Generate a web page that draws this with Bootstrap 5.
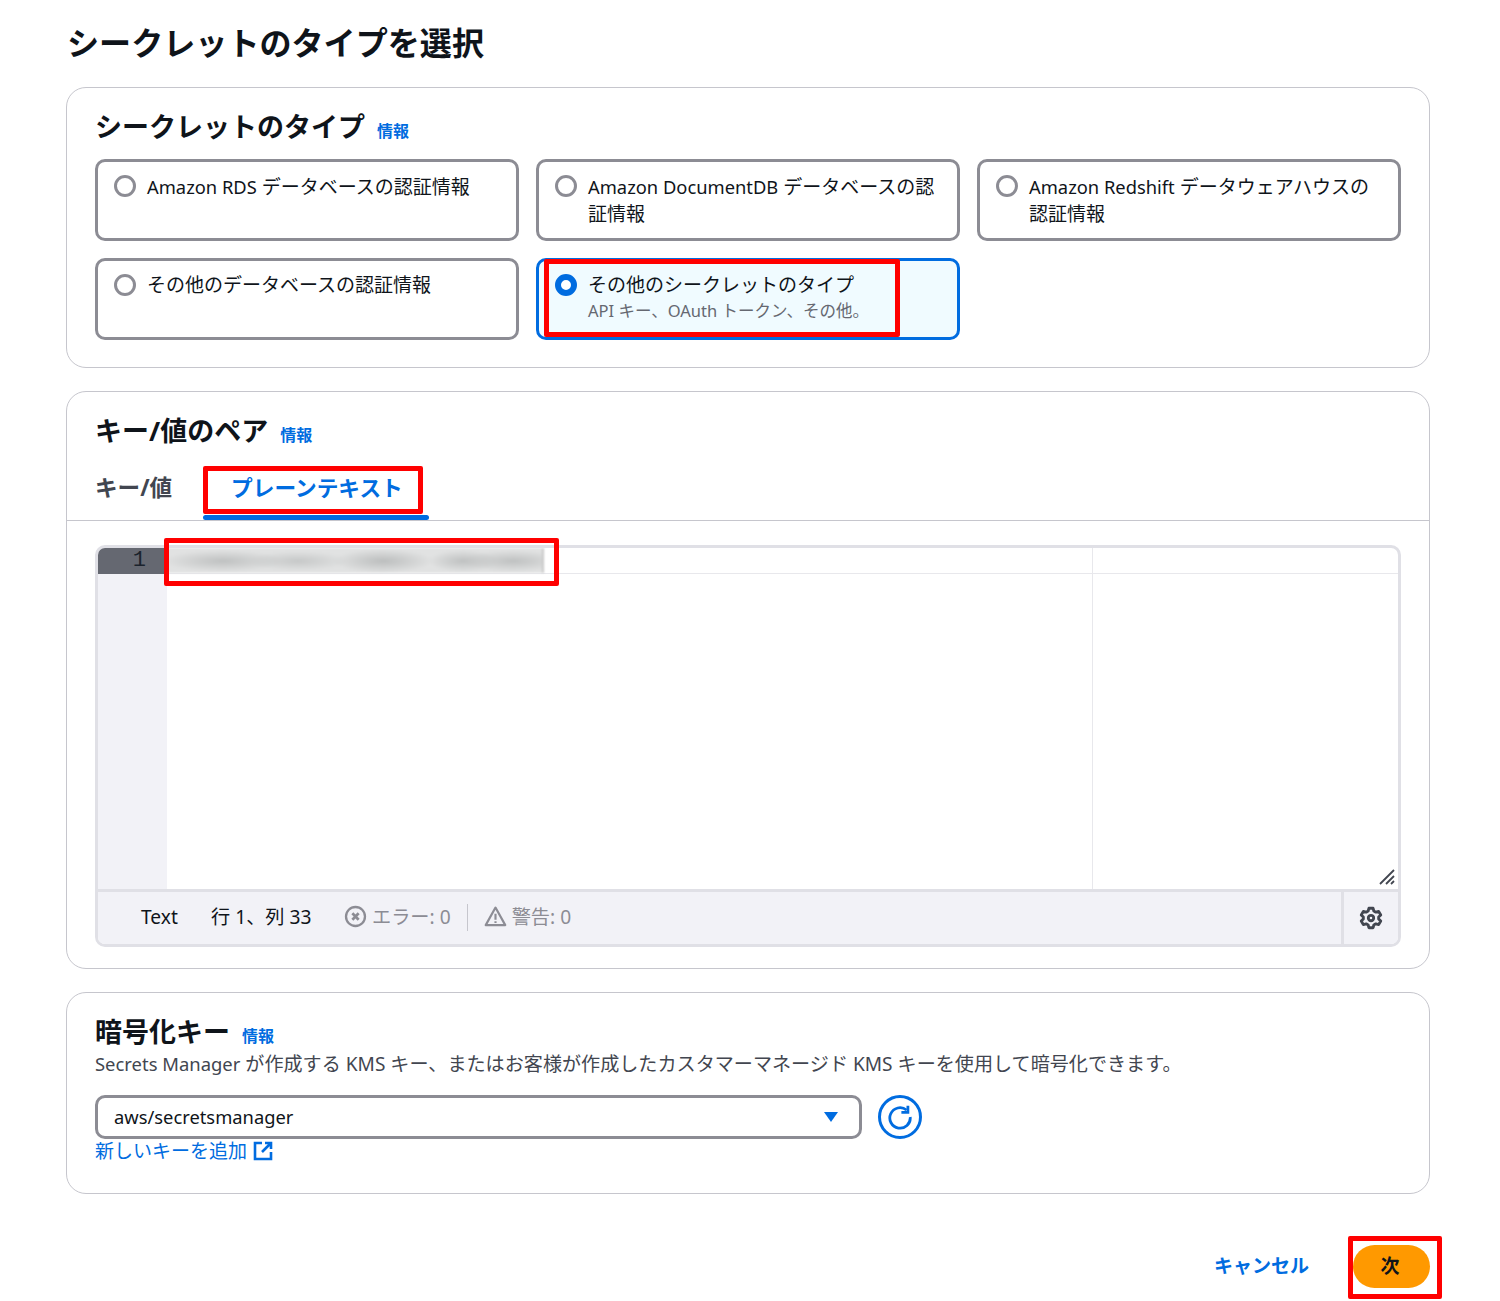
<!DOCTYPE html>
<html lang="ja">

<head>
    <meta charset="UTF-8">
    <meta name="viewport" content="width=device-width, initial-scale=1">
    <title>シークレットのタイプを選択</title>
    <link href="https://cdn.jsdelivr.net/npm/bootstrap@5.3.0/dist/css/bootstrap.min.css" rel="stylesheet">
    <style>
        body {
            font-family: "Noto Sans", "Noto Sans CJK JP", sans-serif;
            color: #0f141a;
            background: #fff;
        }

        .lat {
            font-size: .965em;
        }

        .page-wrap {
            padding: 0 70px 0 66px;
            height: 1301px;
        }

        .page-title {
            font-size: 32.1px;
            font-weight: 700;
            line-height: 44px;
            margin: 0;
            padding: 21px 0 22px 1px;
        }

        .panel {
            border: 1px solid #c6c6cd;
            border-radius: 20px;
            margin-bottom: 23px;
            padding: 0 28px;
            background: #fff;
        }

        .panel-head {
            display: flex;
            align-items: baseline;
            gap: 12px;
            padding-top: 19px;
        }

        .panel-head h2 {
            font-size: 27px;
            font-weight: 700;
            line-height: 40px;
            margin: 0;
        }

        .info-link {
            font-size: 16px;
            font-weight: 700;
            color: #006ce0;
            text-decoration: none;
        }

        .tile-row {
            --bs-gutter-x: 17px;
            --bs-gutter-y: 17px;
        }

        .tile {
            position: relative;
            display: flex;
            gap: 11px;
            height: 82px;
            padding: 10.5px 12px 0 16px;
            border: 3px solid #8c8c94;
            border-radius: 10px;
            font-size: 19px;
            line-height: 27px;
        }

        .tile-on {
            border-color: #006ce0;
            background: #f0fbff;
        }

        .tile-sub {
            font-size: 16.5px;
            line-height: 24px;
            color: #656871;
        }

        .radio-dot {
            flex: 0 0 22px;
            width: 22px;
            height: 22px;
            margin-top: 2.5px;
            border: 3px solid #8c8c94;
            border-radius: 50%;
            background: #fff;
        }

        .tile-on .radio-dot {
            border: 6px solid #006ce0;
        }

        .mark-box {
            position: absolute;
            border: 5px solid #f00;
            border-radius: 2px;
            pointer-events: none;
            z-index: 5;
        }

        .mark-tile {
            left: 5px;
            top: -2px;
            width: 356px;
            height: 78px;
        }

        .tab-line {
            position: relative;
            display: flex;
            margin: 0 -28px;
            padding-left: 28px;
            height: 70px;
            border-bottom: 1px solid #c6c6cd;
        }

        .tab-item {
            font-size: 21.7px;
            font-weight: 700;
            line-height: 30px;
            padding: 22px 0 0;
            color: #424650;
            text-decoration: none;
        }

        .tab-first {
            width: 108px;
            font-size: 22.6px;
        }

        .tab-active {
            position: relative;
            width: 226px;
            padding-left: 28px;
            color: #006ce0;
        }

        .tab-active::after {
            content: "";
            position: absolute;
            left: 0;
            right: 0;
            bottom: 0;
            height: 5px;
            border-radius: 3px;
            background: #006ce0;
        }

        .mark-tab {
            left: 136px;
            top: 15px;
            width: 220px;
            height: 48px;
        }

        .editor-box {
            position: relative;
            margin-top: 24px;
            height: 402px;
            border: 3px solid #e0e0e6;
            border-radius: 10px;
            overflow: hidden;
        }

        .editor-body {
            display: flex;
            height: 341px;
        }

        .line-nums {
            flex: 0 0 69px;
            background: #f2f2f7;
            font-family: "Liberation Mono", monospace;
            font-size: 22px;
        }

        .line-num-on {
            height: 26px;
            line-height: 26px;
            padding-right: 21px;
            text-align: right;
            color: #1b232d;
            background: #656871;
        }

        .code-area {
            position: relative;
            flex: 1;
        }

        .code-row {
            display: flex;
            height: 26px;
            border-bottom: 1px solid #e8e8ec;
        }

        .blur-strip {
            width: 376px;
            margin-left: 1px;
            background: radial-gradient(ellipse 60px 11px at 55px 13px, #bfc1c1, transparent),
                radial-gradient(ellipse 50px 10px at 130px 13px, #c6c8c8, transparent),
                radial-gradient(ellipse 50px 12px at 215px 13px, #bcbebe, transparent),
                radial-gradient(ellipse 35px 11px at 295px 13px, #bfc1c1, transparent),
                radial-gradient(ellipse 50px 11px at 345px 13px, #bfc1c1, transparent),
                #e1e2e2;
            filter: blur(1px);
            border-right: 2px solid #c8c8c8;
        }

        .print-margin {
            position: absolute;
            top: 0;
            bottom: 0;
            left: 925px;
            width: 1px;
            background: #e8e8ec;
        }

        .resize-grip {
            position: absolute;
            right: 2px;
            bottom: 3px;
            color: #424650;
        }

        .mark-code {
            left: 69px;
            top: -7px;
            width: 395px;
            height: 48px;
        }

        .editor-foot {
            display: flex;
            align-items: center;
            height: 55px;
            padding: 0 0 2px 43px;
            background: #f2f2f7;
            border-top: 3px solid #e0e0e6;
            font-size: 19.2px;
            color: #0f141a;
            white-space: nowrap;
        }

        .foot-muted {
            display: flex;
            align-items: center;
            gap: 5px;
            color: #8c8c94;
        }

        .foot-sep {
            width: 1px;
            height: 27px;
            margin: 0 16px;
            background: #c6c6cd;
        }

        .foot-gear {
            display: flex;
            align-items: center;
            justify-content: center;
            width: 57px;
            height: calc(100% + 2px);
            margin: 0 0 -2px auto;
            border-left: 3px solid #e0e0e6;
            color: #424650;
        }

        .panel-desc {
            font-size: 19.1px;
            line-height: 26px;
            color: #424650;
            white-space: nowrap;
        }

        .key-select {
            display: flex;
            align-items: center;
            justify-content: space-between;
            width: 767px;
            height: 44px;
            padding: 0 20px 0 16px;
            border: 3px solid #8c8c94;
            border-radius: 10px;
            font-size: 19px;
        }

        .select-row {
            margin-top: 18px;
        }

        .round-btn {
            display: flex;
            align-items: center;
            justify-content: center;
            width: 44px;
            height: 44px;
            padding: 0;
            border: 3px solid #006ce0;
            border-radius: 50%;
            background: #fff;
            color: #006ce0;
        }

        .add-link {
            display: flex;
            align-items: center;
            gap: 6px;
            font-size: 19px;
            line-height: 24px;
            color: #006ce0;
            text-decoration: none;
        }

        .page-foot {
            position: relative;
            margin-top: 51px;
            height: 43px;
        }

        .cancel-link {
            font-size: 19px;
            font-weight: 700;
            color: #006ce0;
            text-decoration: none;
            margin-right: 44px;
        }

        .next-btn {
            width: 77px;
            height: 43px;
            padding: 0 3px 0 0;
            border: 0;
            font-size: 19px;
            font-weight: 700;
            color: #0f141a;
            background: #ff9900;
        }

        .mark-next {
            right: -12px;
            top: -9px;
            width: 94px;
            height: 63px;
        }
    </style>
</head>

<body>
    <div class="page-wrap">
        <h1 class="page-title">シークレットのタイプを選択</h1>

        <section class="panel" style="height:281px">
            <div class="panel-head pb-2">
                <h2>シークレットのタイプ</h2>
                <a class="info-link" href="#">情報</a>
            </div>
            <div class="row row-cols-3 tile-row pt-1">
                <div class="col">
                    <div class="tile">
                        <span class="radio-dot"></span>
                        <div><span class="lat">Amazon RDS</span> データベースの認証情報</div>
                    </div>
                </div>
                <div class="col">
                    <div class="tile">
                        <span class="radio-dot"></span>
                        <div><span class="lat">Amazon DocumentDB</span> データベースの認<br>証情報</div>
                    </div>
                </div>
                <div class="col">
                    <div class="tile">
                        <span class="radio-dot"></span>
                        <div><span class="lat">Amazon Redshift</span> データウェアハウスの<br>認証情報</div>
                    </div>
                </div>
                <div class="col">
                    <div class="tile">
                        <span class="radio-dot"></span>
                        <div>その他のデータベースの認証情報</div>
                    </div>
                </div>
                <div class="col">
                    <div class="tile tile-on">
                        <span class="radio-dot"></span>
                        <div>その他のシークレットのタイプ<div class="tile-sub">API キー、OAuth トークン、その他。</div></div>
                        <div class="mark-box mark-tile"></div>
                    </div>
                </div>
            </div>
        </section>

        <section class="panel" style="height:578px">
            <div class="panel-head">
                <h2>キー/値のペア</h2>
                <a class="info-link" href="#">情報</a>
            </div>
            <div class="tab-line">
                <a class="tab-item tab-first" href="#">キー/値</a>
                <a class="tab-item tab-active" href="#">プレーンテキスト</a>
                <div class="mark-box mark-tab"></div>
            </div>
            <div class="position-relative">
                <div class="editor-box">
                    <div class="editor-body">
                        <div class="line-nums">
                            <div class="line-num-on">1</div>
                        </div>
                        <div class="code-area">
                            <div class="code-row">
                                <div class="blur-strip"></div>
                            </div>
                            <div class="print-margin"></div>
                            <svg class="resize-grip" width="18" height="18" viewBox="0 0 18 18" fill="none"
                                stroke="currentColor" stroke-width="1.8">
                                <path d="M2 16 16 2M8 16l8-8M13 16l3-3" />
                            </svg>
                        </div>
                    </div>
                    <div class="editor-foot">
                        <span style="width:70px">Text</span>
                        <span style="width:133px">行 1、列 33</span>
                        <span class="foot-muted">
                            <svg width="23" height="23" viewBox="0 0 16 16" fill="none" stroke="currentColor"
                                stroke-width="1.6">
                                <circle cx="8" cy="8" r="6.6" />
                                <path d="m5.8 5.800 4.400 4.400m0-4.400-4.400 4.400" stroke-width="1.9" />
                            </svg>
                            エラー: 0
                        </span>
                        <span class="foot-sep"></span>
                        <span class="foot-muted">
                            <svg width="23" height="23" viewBox="0 0 16 16" fill="none" stroke="currentColor"
                                stroke-width="1.5" stroke-linejoin="round">
                                <path d="M8 1.800 14.800 14H1.200z" />
                                <path d="M8 6v4.200M8 11.300v1.200" />
                            </svg>
                            警告: 0
                        </span>
                        <span class="foot-gear">
                            <svg width="24" height="24" viewBox="0 0 16 16" fill="none" stroke="currentColor"
                                stroke-width="1.9" stroke-linejoin="round">
                                <path
                                    d="M6.600 1.500h2.800l.5 1.900 1.300.7 1.900-.5 1.400 2.400-1.400 1.400v1.200l1.400 1.400-1.400 2.400-1.900-.5-1.300.7-.5 1.900H6.600l-.5-1.900-1.300-.7-1.900.5-1.400-2.400 1.400-1.400V7.400L1.500 6l1.400-2.400 1.900.5 1.300-.7z" />
                                <circle cx="8" cy="8" r="1.800" />
                            </svg>
                        </span>
                    </div>
                </div>
                <div class="mark-box mark-code"></div>
            </div>
        </section>

        <section class="panel" style="height:202px">
            <div class="panel-head" style="height:58px">
                <h2>暗号化キー</h2>
                <a class="info-link" href="#">情報</a>
            </div>
            <div class="panel-desc"><span class="lat">Secrets Manager</span> が作成する KMS キー、またはお客様が作成したカスタマーマネージド KMS キーを使用して暗号化できます。</div>
            <div class="d-flex align-items-center gap-3 select-row">
                <div class="key-select">
                    <span class="lat">aws/secretsmanager</span>
                    <svg width="16" height="12" viewBox="0 0 16 12" fill="#006ce0">
                        <path d="M1 1h14l-7 10z" />
                    </svg>
                </div>
                <button class="round-btn" type="button" aria-label="refresh">
                    <svg width="26" height="26" viewBox="0 0 28 28" fill="none" stroke="currentColor"
                        stroke-width="3">
                        <path d="M21 6.500A11 11 0 1 0 25 14" />
                        <path d="M22.500 2v7h-7" stroke-linejoin="miter" />
                    </svg>
                </button>
            </div>
            <a class="add-link" href="#">新しいキーを追加
                <svg width="20" height="20" viewBox="0 0 20 20" fill="none" stroke="currentColor" stroke-width="2.600">
                    <path d="M9 2H2v16h16v-7M12 2h6v6M18 2 9 11" />
                </svg>
            </a>
        </section>

        <div class="page-foot d-flex justify-content-end align-items-center">
            <a class="cancel-link" href="#">キャンセル</a>
            <button class="btn next-btn rounded-pill" type="button">次</button>
            <div class="mark-box mark-next"></div>
        </div>
    </div>

    <script src="https://cdn.jsdelivr.net/npm/bootstrap@5.3.0/dist/js/bootstrap.bundle.min.js"></script>
</body>

</html>
